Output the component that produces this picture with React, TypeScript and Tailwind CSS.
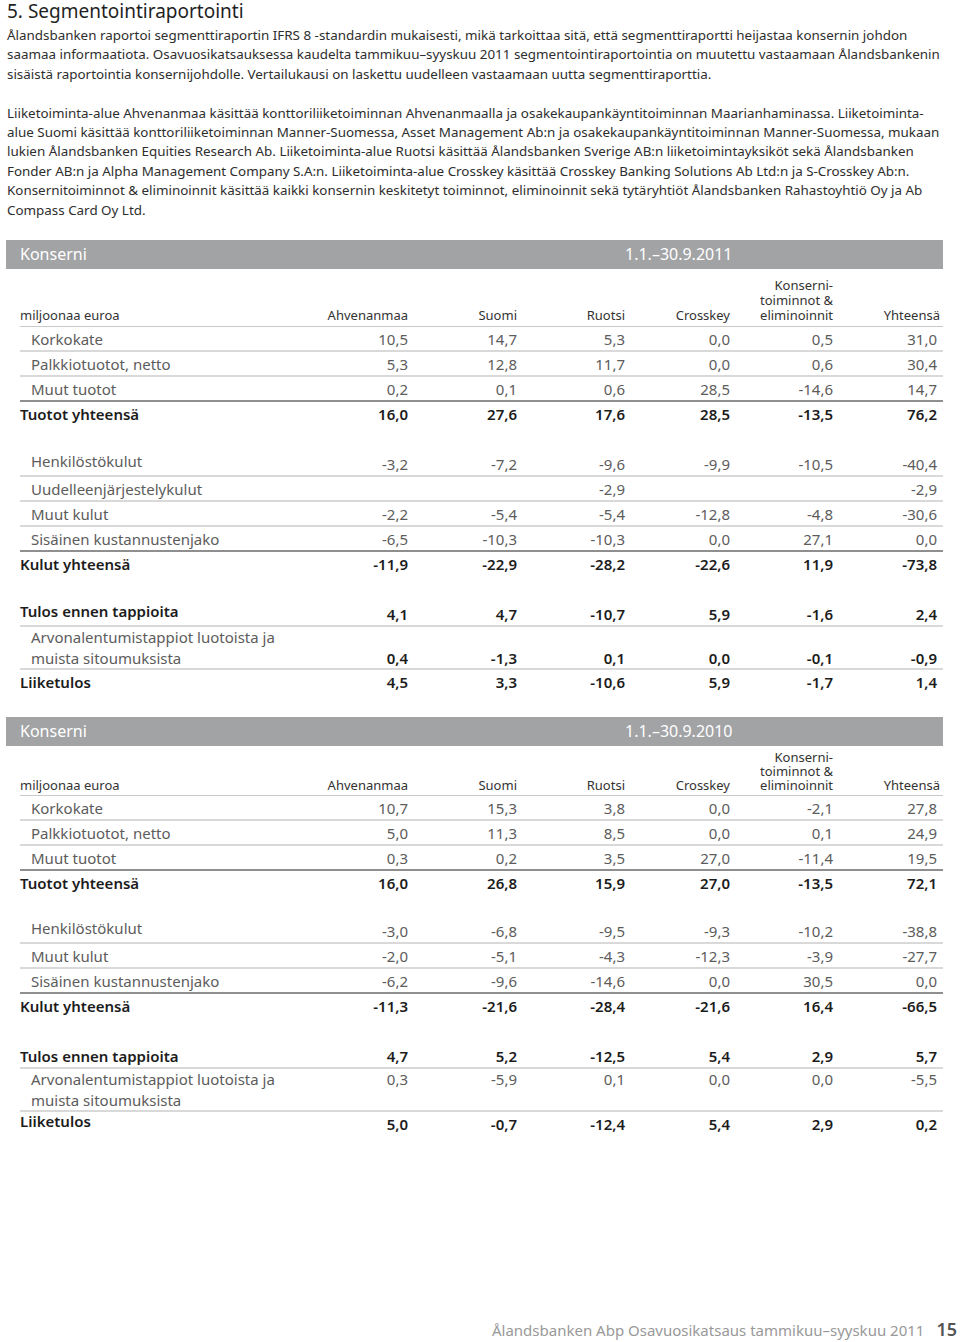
type Row = {
  label: string[];
  values: string[];
  kind: "sub" | "total" | "spacer";
  line?: "light" | "dark";
  dark?: boolean;
  top?: boolean;
  lift?: boolean;
  h?: string;
};

const cols = "grid grid-cols-[300px_88px_109px_108px_105px_103px_107px]";

const table2011: Row[] = [
  { label: ["Korkokate"], values: ["10,5", "14,7", "5,3", "0,0", "0,5", "31,0"], kind: "sub", line: "light" },
  { label: ["Palkkiotuotot, netto"], values: ["5,3", "12,8", "11,7", "0,0", "0,6", "30,4"], kind: "sub", line: "light" },
  { label: ["Muut tuotot"], values: ["0,2", "0,1", "0,6", "28,5", "-14,6", "14,7"], kind: "sub", line: "dark" },
  { label: ["Tuotot yhteensä"], values: ["16,0", "27,6", "17,6", "28,5", "-13,5", "76,2"], kind: "total" },
  { label: [], values: [], kind: "spacer", h: "h-[25px]" },
  { label: ["Henkilöstökulut"], values: ["-3,2", "-7,2", "-9,6", "-9,9", "-10,5", "-40,4"], kind: "sub", line: "light", lift: true },
  { label: ["Uudelleenjärjestelykulut"], values: ["", "", "-2,9", "", "", "-2,9"], kind: "sub", line: "light" },
  { label: ["Muut kulut"], values: ["-2,2", "-5,4", "-5,4", "-12,8", "-4,8", "-30,6"], kind: "sub", line: "light" },
  { label: ["Sisäinen kustannustenjako"], values: ["-6,5", "-10,3", "-10,3", "0,0", "27,1", "0,0"], kind: "sub", line: "dark" },
  { label: ["Kulut yhteensä"], values: ["-11,9", "-22,9", "-28,2", "-22,6", "11,9", "-73,8"], kind: "total" },
  { label: [], values: [], kind: "spacer", h: "h-[25px]" },
  { label: ["Tulos ennen tappioita"], values: ["4,1", "4,7", "-10,7", "5,9", "-1,6", "2,4"], kind: "total", line: "light", lift: true },
  {
    label: ["Arvonalentumistappiot luotoista ja", "muista sitoumuksista"],
    values: ["0,4", "-1,3", "0,1", "0,0", "-0,1", "-0,9"],
    kind: "sub",
    line: "light",
    dark: true,
  },
  { label: ["Liiketulos"], values: ["4,5", "3,3", "-10,6", "5,9", "-1,7", "1,4"], kind: "total" },
];

const table2010: Row[] = [
  { label: ["Korkokate"], values: ["10,7", "15,3", "3,8", "0,0", "-2,1", "27,8"], kind: "sub", line: "light" },
  { label: ["Palkkiotuotot, netto"], values: ["5,0", "11,3", "8,5", "0,0", "0,1", "24,9"], kind: "sub", line: "light" },
  { label: ["Muut tuotot"], values: ["0,3", "0,2", "3,5", "27,0", "-11,4", "19,5"], kind: "sub", line: "dark" },
  { label: ["Tuotot yhteensä"], values: ["16,0", "26,8", "15,9", "27,0", "-13,5", "72,1"], kind: "total" },
  { label: [], values: [], kind: "spacer", h: "h-[23px]" },
  { label: ["Henkilöstökulut"], values: ["-3,0", "-6,8", "-9,5", "-9,3", "-10,2", "-38,8"], kind: "sub", line: "light", lift: true },
  { label: ["Muut kulut"], values: ["-2,0", "-5,1", "-4,3", "-12,3", "-3,9", "-27,7"], kind: "sub", line: "light" },
  { label: ["Sisäinen kustannustenjako"], values: ["-6,2", "-9,6", "-14,6", "0,0", "30,5", "0,0"], kind: "sub", line: "dark" },
  { label: ["Kulut yhteensä"], values: ["-11,3", "-21,6", "-28,4", "-21,6", "16,4", "-66,5"], kind: "total" },
  { label: [], values: [], kind: "spacer", h: "h-[25px]" },
  { label: ["Tulos ennen tappioita"], values: ["4,7", "5,2", "-12,5", "5,4", "2,9", "5,7"], kind: "total", line: "light" },
  {
    label: ["Arvonalentumistappiot luotoista ja", "muista sitoumuksista"],
    values: ["0,3", "-5,9", "0,1", "0,0", "0,0", "-5,5"],
    kind: "sub",
    line: "light",
    top: true,
  },
  { label: ["Liiketulos"], values: ["5,0", "-0,7", "-12,4", "5,4", "2,9", "0,2"], kind: "total", lift: true },
];

function SegmentTable({ period, rows, headerH, headLeading }: { period: string; rows: Row[]; headerH: string; headLeading: string }) {
  return (
    <div>
      {/* Grey title bar */}
      <div className="ml-[6px] w-[937px] h-[29px] bg-[#a2a3a5] text-white text-[16px] leading-[29px] pl-[14px]">
        <div className={cols}>
          <div className="col-span-4">Konserni</div>
          <div className="col-span-3">{period}</div>
        </div>
      </div>

      <div className="ml-[20px] w-[923px]">
        {/* Column headings */}
        <div className={`${cols} ${headerH} items-end text-[13px] ${headLeading} text-[#333] border-b border-[#c9c9c9] pb-[3px]`}>
          <div>miljoonaa euroa</div>
          <div className="text-right">Ahvenanmaa</div>
          <div className="text-right">Suomi</div>
          <div className="text-right">Ruotsi</div>
          <div className="text-right">Crosskey</div>
          <div className="text-right">
            Konserni-
            <br />
            toiminnot &amp;
            <br />
            eliminoinnit
          </div>
          <div className="text-right">Yhteensä</div>
        </div>

        {rows.map((r, i) => {
          if (r.kind === "spacer") return <div key={i} className={r.h} />;
          const border =
            r.line === "dark"
              ? "border-[#8f8f8f]"
              : r.line === "light"
              ? "border-[#d9d9d9]"
              : "border-transparent";
          const total = r.kind === "total";
          const multi = r.label.length > 1;
          const valColor = total || r.dark ? "text-[#1c1c1c] font-semibold" : "text-[#5c5c5c]";
          return (
            <div
              key={i}
              className={`${cols} border-b-2 ${border} text-[15px] ${multi ? "leading-[20.5px] py-0" : "leading-[20px] py-[1.5px]"} ${
                r.top ? "items-start" : "items-end"
              }`}
            >
              <div className={`${total ? "text-[#1c1c1c] font-semibold" : "pl-[11px] text-[#5c5c5c]"} ${r.lift ? "mb-[3px] -mt-[3px]" : ""}`}>
                {r.label.map((l) => (
                  <div key={l}>{l}</div>
                ))}
              </div>
              {r.values.map((v, j) => (
                <div key={j} className={`text-right ${valColor} ${j === 5 ? "pr-[3px]" : ""}`}>
                  {v}
                </div>
              ))}
            </div>
          );
        })}
      </div>
    </div>
  );
}

export default function App() {
  return (
    <div className="w-[960px] h-[1342px] bg-white font-['Noto_Sans',sans-serif] flex flex-col">
      <h1 className="px-[7px] text-[19px] leading-[24px] -mt-[1px] text-[#1f1f1f]">5. Segmentointiraportointi</h1>

      <div className="px-[7px] pt-[3px] text-[13.4px] leading-[19.4px] text-[#2e2e2e] whitespace-nowrap">
        <p>
          Ålandsbanken raportoi segmenttiraportin IFRS 8 -standardin mukaisesti, mikä tarkoittaa sitä, että segmenttiraportti heijastaa konsernin johdon
          <br />
          saamaa informaatiota. Osavuosikatsauksessa kaudelta tammikuu–syyskuu 2011 segmentointiraportointia on muutettu vastaamaan Ålandsbankenin
          <br />
          sisäistä raportointia konsernijohdolle. Vertailukausi on laskettu uudelleen vastaamaan uutta segmenttiraporttia.
        </p>
        <p className="mt-[19.4px]">
          Liiketoiminta-alue Ahvenanmaa käsittää konttoriliiketoiminnan Ahvenanmaalla ja osakekaupankäyntitoiminnan Maarianhaminassa. Liiketoiminta-
          <br />
          alue Suomi käsittää konttoriliiketoiminnan Manner-Suomessa, Asset Management Ab:n ja osakekaupankäyntitoiminnan Manner-Suomessa, mukaan
          <br />
          lukien Ålandsbanken Equities Research Ab. Liiketoiminta-alue Ruotsi käsittää Ålandsbanken Sverige AB:n liiketoimintayksiköt sekä Ålandsbanken
          <br />
          Fonder AB:n ja Alpha Management Company S.A:n. Liiketoiminta-alue Crosskey käsittää Crosskey Banking Solutions Ab Ltd:n ja S-Crosskey Ab:n.
          <br />
          Konsernitoiminnot &amp; eliminoinnit käsittää kaikki konsernin keskitetyt toiminnot, eliminoinnit sekä tytäryhtiöt Ålandsbanken Rahastoyhtiö Oy ja Ab
          <br />
          Compass Card Oy Ltd.
        </p>
      </div>

      <div className="mt-[20px]">
        <SegmentTable period="1.1.–30.9.2011" rows={table2011} headerH="h-[58px]" headLeading="leading-[15px]" />
      </div>

      <div className="mt-[22px]">
        <SegmentTable period="1.1.–30.9.2010" rows={table2010} headerH="h-[50px]" headLeading="leading-[14px]" />
      </div>

      <div className="mt-auto mb-[2px] flex items-end justify-end gap-[12px] pr-[3px]">
        <span className="text-[15px] leading-[20px] text-[#999]">Ålandsbanken Abp Osavuosikatsaus tammikuu–syyskuu 2011</span>
        <span className="text-[18px] leading-[22px] text-[#555] font-semibold">15</span>
      </div>
    </div>
  );
}
